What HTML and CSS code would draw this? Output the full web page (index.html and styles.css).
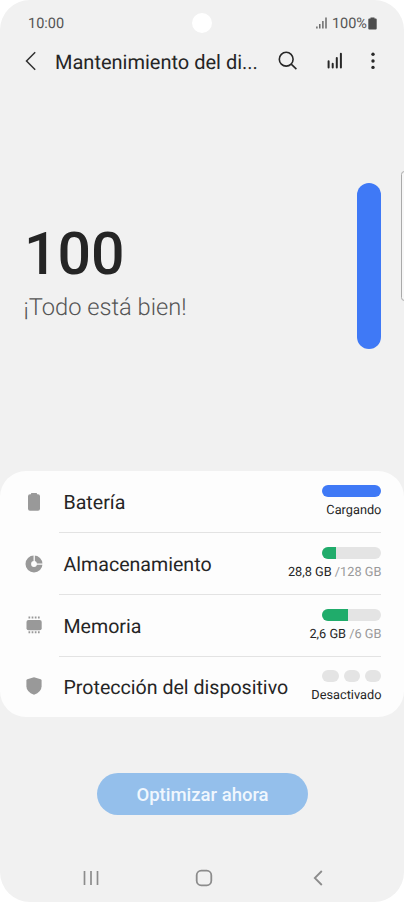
FILE: index.html
```html
<!DOCTYPE html>
<html lang="es">
<head>
<meta charset="utf-8">
<title>Mantenimiento del dispositivo</title>
<link rel="stylesheet" href="styles.css">
</head>
<body>
<main class="phone">
  <div class="status">
    <span class="time">10:00</span>
    <span class="camera"></span>
    <div class="indicators">
      <svg class="signal" width="11" height="12" viewBox="0 0 11 12"><path d="M.9 9.5v2M3.8 7v4.5M6.9 4v7.5M10 .5v11" stroke="#555" stroke-width="1.3"/></svg>
      <span class="percent">100%</span>
      <svg width="9" height="13" viewBox="0 0 9 13"><path d="M2.5 1.500V.4h4v1.100h1.200q1 0 1 1v9q0 1-1 1H1.300q-1 0-1-1v-9q0-1 1-1z" fill="#4d4d4d"/></svg>
    </div>
  </div>
  <header class="header">
    <svg class="back" width="12" height="20" viewBox="0 0 12 20"><path d="M10.200 1.200 1.500 10l8.700 8.800" fill="none" stroke="#303030" stroke-width="1.500"/></svg>
    <h1 class="title">Mantenimiento del di...</h1>
    <svg class="search" width="20" height="20" viewBox="0 0 20 20"><g fill="none" stroke="#282828" stroke-width="1.600"><circle cx="8.200" cy="8.200" r="6.900"/><path d="m13.200 13.200 5.200 5"/></g></svg>
    <svg class="chart" width="16" height="18" viewBox="0 0 16 18"><path d="M1.600 9.200v6.300M5.700 11.800v3.700M9.800 6v9.500M13.900 1.800v13.700" stroke="#282828" stroke-width="2" stroke-linecap="round"/></svg>
    <svg class="more" width="4" height="18" viewBox="0 0 4 18"><g fill="#282828"><circle cx="2" cy="2.200" r="1.700"/><circle cx="2" cy="9" r="1.700"/><circle cx="2" cy="15.400" r="1.700"/></g></svg>
  </header>
  <section class="hero">
    <div class="summary">
      <div class="score">100</div>
      <p class="message">¡Todo está bien!</p>
    </div>
    <div class="score-bar"></div>
    <div class="edge-handle"></div>
  </section>
  <section class="card">
    <div class="row">
      <svg class="icon" width="18" height="20" viewBox="0 0 18 20"><path d="M6 2.200V1.600q0-.6.6-.6h4.800q.6 0 .6.6v.6h1q2 0 2 2v12.600q0 2-2 2H5q-2 0-2-2V4.200q0-2 2-2z" fill="#999"/></svg>
      <div class="body"><span class="label">Batería</span><div class="stat"><div class="bar charged"></div><span class="value">Cargando</span></div></div>
    </div>
    <div class="row">
      <svg class="icon" width="18" height="20" viewBox="0 0 18 20"><circle cx="9" cy="10" r="5.700" fill="none" stroke="#999" stroke-width="5.600"/><path d="M9.200 8V1M11 10.100h7" stroke="#fdfdfd" stroke-width="1.300"/></svg>
      <div class="body"><span class="label">Almacenamiento</span><div class="stat"><div class="bar"><div class="fill" style="width:23.5%"></div></div><span class="value">28,8 GB <span class="total">/128 GB</span></span></div></div>
    </div>
    <div class="row">
      <svg class="icon" width="18" height="20" viewBox="0 0 18 20"><rect x="1.500" y="5" width="15.200" height="10.200" rx="2" fill="#999"/><path d="M3.500 2.500h11.500M3.500 17.300h11.500" stroke="#999" stroke-width="2" stroke-dasharray="1.700 1.450"/></svg>
      <div class="body"><span class="label">Memoria</span><div class="stat"><div class="bar"><div class="fill" style="width:43.5%"></div></div><span class="value">2,6 GB <span class="total">/6 GB</span></span></div></div>
    </div>
    <div class="row">
      <svg class="icon" width="18" height="20" viewBox="0 0 18 20"><path d="M9 1.200 15.700 3.200q.9.300.9 1.200v5.800q0 5.500-7.600 8.600-7.600-3.100-7.600-8.600V4.400q0-.9.9-1.200z" fill="#999"/></svg>
      <div class="body"><span class="label">Protección del dispositivo</span><div class="stat"><div class="pills"><i></i><i></i><i></i></div><span class="value">Desactivado</span></div></div>
    </div>
  </section>
  <button class="optimize">Optimizar ahora</button>
  <nav class="nav">
    <svg width="16" height="16" viewBox="0 0 16 16"><path d="M1.500 1v14M8 1v14M14.500 1v14" stroke="#8c8c8c" stroke-width="1.700"/></svg>
    <svg class="home" width="18" height="18" viewBox="0 0 18 18"><rect x="1.700" y="1.700" width="14.600" height="14.600" rx="4.500" fill="none" stroke="#8c8c8c" stroke-width="1.800"/></svg>
    <svg width="10" height="16" viewBox="0 0 10 16"><path d="M8.800 1 1.800 8l7 7" fill="none" stroke="#8c8c8c" stroke-width="1.800"/></svg>
  </nav>
</main>
</body>
</html>
```
FILE: styles.css
```css
* { box-sizing: border-box; }
body { margin: 0; background: #fff; font-family: Roboto, sans-serif; color: #252525; text-rendering: geometricPrecision; }
svg { display: block; flex: none; }

.phone {
  width: 404px;
  height: 902px;
  background: #f1f1f1;
  border-radius: 30px;
  overflow: hidden;
  display: flex;
  flex-direction: column;
}

.status {
  height: 46px;
  padding: 0 27px 0 28px;
  display: grid;
  grid-template-columns: 164px 20px 1fr;
  align-items: center;
  font-size: 14.5px;
  color: #555;
}
.time { padding-top: 1px; }
.camera { width: 20px; height: 20px; border-radius: 50%; background: #fff; }
.indicators { display: flex; align-items: center; justify-content: flex-end; }
.signal { margin-right: 5px; }
.percent { padding-top: 1px; margin-right: 1px; }

.header { height: 30px; padding-left: 25px; display: flex; align-items: center; }
.title { margin: 2px 0 0 18px; width: 223px; font-size: 20px; line-height: 30px; font-weight: 400; white-space: nowrap; }
.search { margin-left: -0.5px; }
.chart { margin-left: 29.5px; }
.more { margin-left: 28px; }

.hero {
  position: relative;
  height: 395px;
  padding: 107px 22.6px 0 24px;
  display: flex;
  justify-content: space-between;
}
.summary { padding-top: 40px; }
.score { font-size: 59px; line-height: 64px; font-weight: 500; }
.message { margin: 4px 0 0 -0.5px; font-size: 23.7px; line-height: 32px; font-weight: 300; color: #555; }
.score-bar { width: 24px; height: 166px; border-radius: 12px; background: #3f79f6; }
.edge-handle {
  position: absolute;
  right: -4px;
  top: 95px;
  width: 7px;
  height: 130px;
  border: 1px solid #aaa;
  border-radius: 4px;
  background: #f7f7f7;
}

.card { height: 246px; background: #fdfdfd; border-radius: 26px; padding: 0 22.6px 0 24.5px; display: grid; grid-template-rows: 62.4px 61.7px 61.7px 1fr; }
.row { display: flex; align-items: center; min-height: 0; }
.icon { margin-top: -1px; }
.body {
  flex: 1;
  height: 100%;
  margin-left: 16px;
  padding-left: 5px;
  border-bottom: 1px solid #e3e3e3;
  display: flex;
  align-items: center;
  justify-content: space-between;
}
.row:last-child .body { border-bottom: 0; }
.label { font-size: 19.6px; line-height: 24px; white-space: nowrap; padding-top: 3px; }
.stat { display: flex; flex-direction: column; align-items: flex-end; gap: 6px; }
.bar { width: 59.4px; height: 12px; border-radius: 6px; background: #e4e4e4; overflow: hidden; }
.charged { background: #3f79f6; }
.fill { height: 100%; background: #20ac6b; }
.value { font-size: 12.75px; line-height: 15px; white-space: nowrap; }
.total { color: #999; }
.pills { display: flex; gap: 5px; }
.pills i { width: 16.4px; height: 12px; border-radius: 6px; background: #e4e4e4; }

.optimize {
  width: 211px;
  height: 42px;
  margin: 56px 0 0 97px;
  padding: 1px 0 0;
  border: 0;
  border-radius: 21px;
  background: #94bfeb;
  color: #f0f7fe;
  font: 500 18.5px/42px Roboto, sans-serif;
}
.nav { margin-top: 54px; padding: 0 81px 0 83px; display: flex; justify-content: space-between; align-items: center; }
.home { margin-right: 4px; }
```
